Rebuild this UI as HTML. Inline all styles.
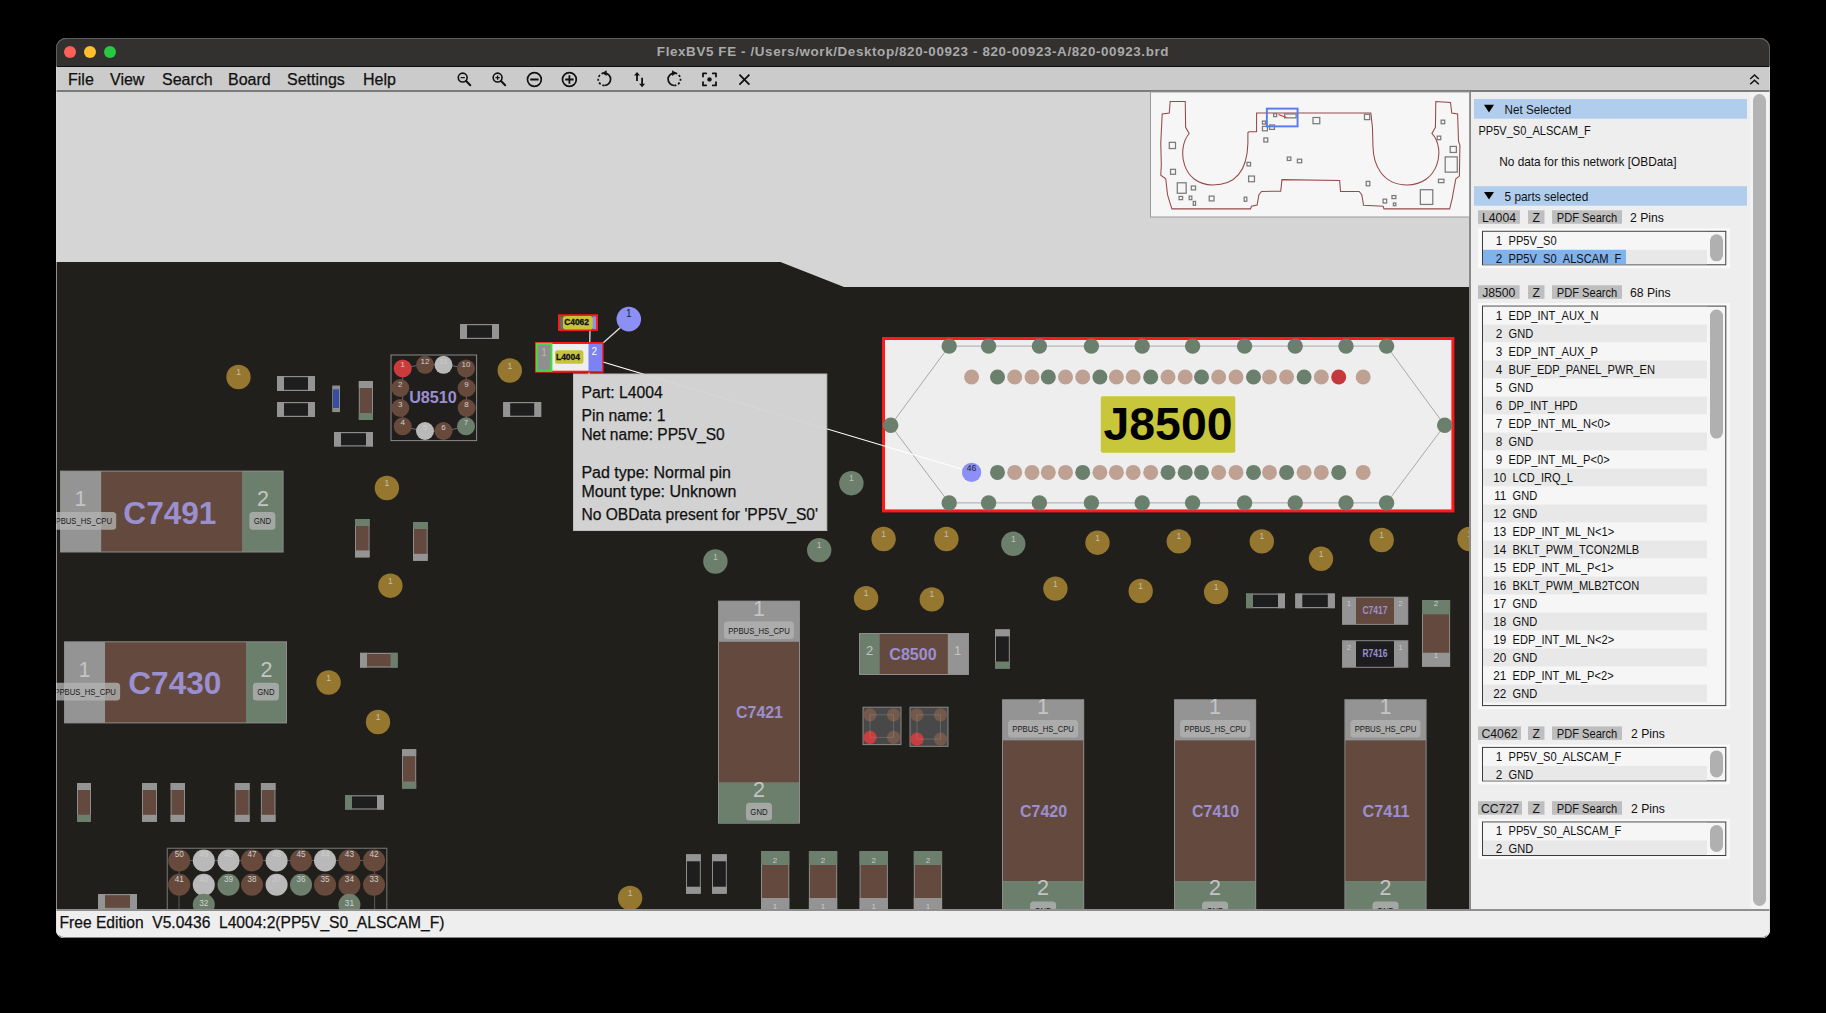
<!DOCTYPE html>
<html><head><meta charset="utf-8">
<style>
*{margin:0;padding:0;box-sizing:border-box}
html,body{width:1826px;height:1013px;background:#000;overflow:hidden;font-family:"Liberation Sans",sans-serif}
#win{position:absolute;left:56px;top:38px;width:1714px;height:900px;border-radius:10px 10px 8px 8px;overflow:hidden;background:#eeeeee}
#pg{position:absolute;left:-56px;top:-38px;width:1826px;height:1013px}
.a{position:absolute;white-space:pre}
#title{left:56px;top:38px;width:1714px;height:28px;background:#323130;border-top:1px solid #5c5b5a}
#ttxt{left:56px;top:44px;width:1714px;text-align:center;color:#a9a9a9;font-weight:bold;font-size:13.4px;letter-spacing:0.62px}
.dot{position:absolute;width:12px;height:12px;border-radius:50%;top:46px}
#menu{left:56px;top:66px;width:1714px;height:26px;background:#cbcbcb;border-top:1px solid #0e0e0e;border-bottom:2px solid #7b7b7b}
.mi{position:absolute;top:71.3px;font-size:16px;color:#111;-webkit-text-stroke:0.25px #111}
#board{position:absolute;left:56px;top:92px;width:1413px;height:817px}
#split{left:1469px;top:92px;width:2px;height:817px;background:#8a8a8a}
#panel{left:1471px;top:92px;width:299px;height:817px;background:#eeeeee}
#status{left:56px;top:909px;width:1714px;height:29px;background:#eeeeee;border-top:2px solid #8f8f8f}
#stxt{left:59.5px;top:914.3px;font-size:15.6px;color:#111;-webkit-text-stroke:0.25px #111}
.hdr{position:absolute;left:1474px;width:273px;height:20px;background:#b0cdee}
.hdr .tri{position:absolute;left:9px;top:6px;width:0;height:0;border-left:5px solid transparent;border-right:5px solid transparent;border-top:8px solid #000}
.hdr .ht{position:absolute;left:30px;top:3px;font-size:12.4px;color:#111}
.pt{font-size:12px;color:#111}
.btn{position:absolute;height:14px;background:#c5c5c5;font-size:12.2px;color:#222;line-height:14px;text-align:center}
.lbo{position:absolute;left:1478px;width:252px;background:#f9f9f9}
.lbi{position:absolute;left:1482px;width:244px;border:1px solid #3a3a3a;background:#f6f6f6;overflow:hidden}
.row{position:absolute;left:0;width:224px;height:18px;font-size:12px;color:#111}
.row.o{background:#f6f6f6}.row.e{background:#e8e8e8}
.row .n{position:absolute;right:204px;top:2px;text-align:right}
.row .t{position:absolute;left:25px;top:2px}
.lsb{position:absolute;left:227px;width:13px;background:#b0b0b0;border-radius:7px}
.icon{position:absolute;top:71px;width:18px;height:18px}
</style></head><body>
<div id="win"><div id="pg">
<div id="title" class="a"></div>
<div id="ttxt" class="a">FlexBV5 FE - /Users/work/Desktop/820-00923 - 820-00923-A/820-00923.brd</div>
<div class="dot" style="left:64px;background:#fe5f57"></div>
<div class="dot" style="left:84px;background:#febc2e"></div>
<div class="dot" style="left:104px;background:#28c840"></div>
<div id="menu" class="a"></div>
<div class="mi" style="left:68px">File</div>
<div class="mi" style="left:110px">View</div>
<div class="mi" style="left:162px">Search</div>
<div class="mi" style="left:228px">Board</div>
<div class="mi" style="left:287px">Settings</div>
<div class="mi" style="left:363px">Help</div>
<svg style="position:absolute;left:0;top:0" width="1826" height="95" viewBox="0 0 1826 95"><circle cx="462.7" cy="77.6" r="4.45" fill="none" stroke="#111" stroke-width="1.6"/>
<line x1="466.09999999999997" y1="81" x2="470.3" y2="85.3" stroke="#111" stroke-width="2" stroke-linecap="round"/>
<line x1="460.59999999999997" y1="77.6" x2="464.8" y2="77.6" stroke="#111" stroke-width="1.3"/>
<circle cx="497.6" cy="77.6" r="4.45" fill="none" stroke="#111" stroke-width="1.6"/>
<line x1="501.0" y1="81" x2="505.20000000000005" y2="85.3" stroke="#111" stroke-width="2" stroke-linecap="round"/>
<line x1="495.5" y1="77.6" x2="499.70000000000005" y2="77.6" stroke="#111" stroke-width="1.3"/>
<line x1="497.6" y1="75.5" x2="497.6" y2="79.7" stroke="#111" stroke-width="1.3"/>
<circle cx="534.4" cy="79.5" r="6.9" fill="none" stroke="#111" stroke-width="1.7"/><line x1="530.2" y1="79.5" x2="538.6" y2="79.5" stroke="#111" stroke-width="1.8"/>
<circle cx="569.4" cy="79.5" r="6.9" fill="none" stroke="#111" stroke-width="1.7"/><line x1="565.2" y1="79.5" x2="573.6" y2="79.5" stroke="#111" stroke-width="1.8"/><line x1="569.4" y1="75.3" x2="569.4" y2="83.7" stroke="#111" stroke-width="1.8"/>
<path d="M604.4 73.1 A6.2 6.2 0 0 1 604.4 85.5" fill="none" stroke="#111" stroke-width="1.7"/>
<path d="M604.4 85.5 A6.2 6.2 0 0 1 604.4 73.1" fill="none" stroke="#111" stroke-width="1.7" stroke-dasharray="2.1 1.9"/>
<path d="M602.2 73.1 L606.6 70.2 L606.6 76 Z" fill="#111"/>
<path d="M637 81 L637 74.5 M642.1 77.8 L642.1 84.5" fill="none" stroke="#111" stroke-width="1.8"/>
<path d="M634 75.5 L637 72 L640 75.5 Z M639.1 83.8 L642.1 87.2 L645.1 83.8 Z" fill="#111"/>
<path d="M674.3 73.1 A6.2 6.2 0 0 0 674.3 85.5" fill="none" stroke="#111" stroke-width="1.7"/>
<path d="M674.3 85.5 A6.2 6.2 0 0 0 674.3 73.1" fill="none" stroke="#111" stroke-width="1.7" stroke-dasharray="2.1 1.9"/>
<path d="M676.5 73.1 L672.1 70.2 L672.1 76 Z" fill="#111"/>
<path d="M703 76.6 L703 73.4 L706.2 73.4 M712.8 73.4 L716 73.4 L716 76.6 M716 82.2 L716 85.4 L712.8 85.4 M706.2 85.4 L703 85.4 L703 82.2" fill="none" stroke="#111" stroke-width="1.8" stroke-linecap="round" stroke-linejoin="round"/><circle cx="709.5" cy="79.4" r="2.2" fill="#111"/>
<path d="M739.4 74.6 L749.4 84.6 M749.4 74.6 L739.4 84.6" stroke="#111" stroke-width="1.8"/>
<path d="M1750.2 79 L1754.5 75 L1758.8 79 M1750.2 84.2 L1754.5 80.2 L1758.8 84.2" fill="none" stroke="#111" stroke-width="1.5"/></svg>

<svg id="board" viewBox="56 92 1413 817">
<rect x="56" y="92" width="1413" height="817" fill="#d4d5d4"/>
<path d="M56 262 L780.5 262 L844 287 L1469 287 L1469 909 L56 909 Z" fill="#201f1b"/>
<circle cx="238.5" cy="377.0" r="12.2" fill="#96772f"/>
<text x="238.5" y="375.0" font-size="8.5" fill="#c2bfb4" font-weight="400" text-anchor="middle">1</text>
<circle cx="386.9" cy="488.0" r="12.2" fill="#96772f"/>
<text x="386.9" y="486.0" font-size="8.5" fill="#c2bfb4" font-weight="400" text-anchor="middle">1</text>
<circle cx="390.4" cy="585.7" r="12.2" fill="#96772f"/>
<text x="390.4" y="583.7" font-size="8.5" fill="#c2bfb4" font-weight="400" text-anchor="middle">1</text>
<circle cx="328.6" cy="682.5" r="12.2" fill="#96772f"/>
<text x="328.6" y="680.5" font-size="8.5" fill="#c2bfb4" font-weight="400" text-anchor="middle">1</text>
<circle cx="378.0" cy="722.0" r="12.2" fill="#96772f"/>
<text x="378.0" y="720.0" font-size="8.5" fill="#c2bfb4" font-weight="400" text-anchor="middle">1</text>
<circle cx="509.8" cy="370.5" r="12.2" fill="#96772f"/>
<text x="509.8" y="368.5" font-size="8.5" fill="#c2bfb4" font-weight="400" text-anchor="middle">1</text>
<circle cx="883.6" cy="539.0" r="12.2" fill="#96772f"/>
<text x="883.6" y="537.0" font-size="8.5" fill="#c2bfb4" font-weight="400" text-anchor="middle">1</text>
<circle cx="946.4" cy="539.0" r="12.2" fill="#96772f"/>
<text x="946.4" y="537.0" font-size="8.5" fill="#c2bfb4" font-weight="400" text-anchor="middle">1</text>
<circle cx="866.1" cy="598.2" r="12.2" fill="#96772f"/>
<text x="866.1" y="596.2" font-size="8.5" fill="#c2bfb4" font-weight="400" text-anchor="middle">1</text>
<circle cx="931.8" cy="599.4" r="12.2" fill="#96772f"/>
<text x="931.8" y="597.4" font-size="8.5" fill="#c2bfb4" font-weight="400" text-anchor="middle">1</text>
<circle cx="1097.5" cy="542.7" r="12.2" fill="#96772f"/>
<text x="1097.5" y="540.7" font-size="8.5" fill="#c2bfb4" font-weight="400" text-anchor="middle">1</text>
<circle cx="1178.8" cy="541.4" r="12.2" fill="#96772f"/>
<text x="1178.8" y="539.4" font-size="8.5" fill="#c2bfb4" font-weight="400" text-anchor="middle">1</text>
<circle cx="1261.8" cy="541.4" r="12.2" fill="#96772f"/>
<text x="1261.8" y="539.4" font-size="8.5" fill="#c2bfb4" font-weight="400" text-anchor="middle">1</text>
<circle cx="1321.0" cy="558.8" r="12.2" fill="#96772f"/>
<text x="1321.0" y="556.8" font-size="8.5" fill="#c2bfb4" font-weight="400" text-anchor="middle">1</text>
<circle cx="1381.7" cy="540.0" r="12.2" fill="#96772f"/>
<text x="1381.7" y="538.0" font-size="8.5" fill="#c2bfb4" font-weight="400" text-anchor="middle">1</text>
<circle cx="1469.5" cy="539.0" r="12.2" fill="#96772f"/>
<text x="1469.5" y="537.0" font-size="8.5" fill="#c2bfb4" font-weight="400" text-anchor="middle">1</text>
<circle cx="1055.4" cy="588.6" r="12.2" fill="#96772f"/>
<text x="1055.4" y="586.6" font-size="8.5" fill="#c2bfb4" font-weight="400" text-anchor="middle">1</text>
<circle cx="1140.7" cy="591.0" r="12.2" fill="#96772f"/>
<text x="1140.7" y="589.0" font-size="8.5" fill="#c2bfb4" font-weight="400" text-anchor="middle">1</text>
<circle cx="1216.1" cy="592.1" r="12.2" fill="#96772f"/>
<text x="1216.1" y="590.1" font-size="8.5" fill="#c2bfb4" font-weight="400" text-anchor="middle">1</text>
<circle cx="630.1" cy="898.0" r="12.2" fill="#96772f"/>
<text x="630.1" y="896.0" font-size="8.5" fill="#c2bfb4" font-weight="400" text-anchor="middle">1</text>
<circle cx="715.4" cy="561.5" r="12.2" fill="#6c7f6d"/>
<text x="715.4" y="559.5" font-size="8.5" fill="#c2bfb4" font-weight="400" text-anchor="middle">1</text>
<circle cx="819.2" cy="550.1" r="12.2" fill="#6c7f6d"/>
<text x="819.2" y="548.1" font-size="8.5" fill="#c2bfb4" font-weight="400" text-anchor="middle">1</text>
<circle cx="1013.3" cy="543.8" r="12.2" fill="#6c7f6d"/>
<text x="1013.3" y="541.8" font-size="8.5" fill="#c2bfb4" font-weight="400" text-anchor="middle">1</text>
<circle cx="851.4" cy="483.2" r="12.2" fill="#6c7f6d"/>
<text x="851.4" y="481.2" font-size="8.5" fill="#c2bfb4" font-weight="400" text-anchor="middle">1</text>
<rect x="277.0" y="376.0" width="38.0" height="15.0" fill="#8c8c8c"/>
<rect x="277.0" y="376.0" width="7.0" height="15.0" fill="#949494"/>
<rect x="308.0" y="376.0" width="7.0" height="15.0" fill="#949494"/>
<rect x="284.0" y="377.2" width="24.0" height="12.6" fill="#1e1e1f"/>
<rect x="277.0" y="402.0" width="38.0" height="15.0" fill="#8c8c8c"/>
<rect x="277.0" y="402.0" width="7.0" height="15.0" fill="#949494"/>
<rect x="308.0" y="402.0" width="7.0" height="15.0" fill="#949494"/>
<rect x="284.0" y="403.2" width="24.0" height="12.6" fill="#1e1e1f"/>
<rect x="334.0" y="432.0" width="39.0" height="14.5" fill="#8c8c8c"/>
<rect x="334.0" y="432.0" width="7.0" height="14.5" fill="#949494"/>
<rect x="366.0" y="432.0" width="7.0" height="14.5" fill="#949494"/>
<rect x="341.0" y="433.2" width="25.0" height="12.1" fill="#1e1e1f"/>
<rect x="460.0" y="324.0" width="39.0" height="15.0" fill="#8c8c8c"/>
<rect x="460.0" y="324.0" width="7.0" height="15.0" fill="#949494"/>
<rect x="492.0" y="324.0" width="7.0" height="15.0" fill="#949494"/>
<rect x="467.0" y="325.2" width="25.0" height="12.6" fill="#1e1e1f"/>
<rect x="503.2" y="402.0" width="38.0" height="14.9" fill="#8c8c8c"/>
<rect x="503.2" y="402.0" width="7.0" height="14.9" fill="#949494"/>
<rect x="534.2" y="402.0" width="7.0" height="14.9" fill="#949494"/>
<rect x="510.2" y="403.2" width="24.0" height="12.5" fill="#1e1e1f"/>
<rect x="332.2" y="385.5" width="7.8" height="26.6" fill="#8c8c8c"/>
<rect x="333.0" y="389.3" width="6.0" height="18.7" fill="#344fa0"/>
<rect x="358.8" y="381.0" width="14.2" height="39.0" fill="#8c8c8c"/>
<rect x="358.8" y="381.0" width="14.2" height="7.0" fill="#949494"/>
<rect x="358.8" y="413.0" width="14.2" height="7.0" fill="#6b7f6c"/>
<rect x="359.8" y="388.0" width="12.2" height="25.0" fill="#644a3e"/>
<rect x="355.0" y="519.0" width="14.6" height="38.4" fill="#8c8c8c"/>
<rect x="355.0" y="519.0" width="14.6" height="7.0" fill="#6b7f6c"/>
<rect x="355.0" y="550.4" width="14.6" height="7.0" fill="#949494"/>
<rect x="356.0" y="526.0" width="12.6" height="24.4" fill="#644a3e"/>
<rect x="413.0" y="522.0" width="14.7" height="38.8" fill="#8c8c8c"/>
<rect x="413.0" y="522.0" width="14.7" height="7.0" fill="#6b7f6c"/>
<rect x="413.0" y="553.8" width="14.7" height="7.0" fill="#949494"/>
<rect x="414.0" y="529.0" width="12.7" height="24.8" fill="#644a3e"/>
<rect x="360.0" y="652.8" width="37.6" height="14.8" fill="#8c8c8c"/>
<rect x="360.0" y="652.8" width="7.0" height="14.8" fill="#949494"/>
<rect x="390.6" y="652.8" width="7.0" height="14.8" fill="#6b7f6c"/>
<rect x="367.0" y="654.0" width="23.6" height="12.4" fill="#644a3e"/>
<rect x="77.0" y="783.0" width="14.0" height="38.8" fill="#8c8c8c"/>
<rect x="77.0" y="783.0" width="14.0" height="7.0" fill="#949494"/>
<rect x="77.0" y="814.8" width="14.0" height="7.0" fill="#6b7f6c"/>
<rect x="78.0" y="790.0" width="12.0" height="24.8" fill="#644a3e"/>
<rect x="142.0" y="783.0" width="15.0" height="38.8" fill="#8c8c8c"/>
<rect x="142.0" y="783.0" width="15.0" height="7.0" fill="#949494"/>
<rect x="142.0" y="814.8" width="15.0" height="7.0" fill="#949494"/>
<rect x="143.0" y="790.0" width="13.0" height="24.8" fill="#644a3e"/>
<rect x="170.6" y="783.0" width="14.4" height="38.8" fill="#8c8c8c"/>
<rect x="170.6" y="783.0" width="14.4" height="7.0" fill="#949494"/>
<rect x="170.6" y="814.8" width="14.4" height="7.0" fill="#949494"/>
<rect x="171.6" y="790.0" width="12.4" height="24.8" fill="#644a3e"/>
<rect x="234.8" y="783.0" width="14.8" height="38.8" fill="#8c8c8c"/>
<rect x="234.8" y="783.0" width="14.8" height="7.0" fill="#949494"/>
<rect x="234.8" y="814.8" width="14.8" height="7.0" fill="#949494"/>
<rect x="235.8" y="790.0" width="12.8" height="24.8" fill="#644a3e"/>
<rect x="260.9" y="783.0" width="14.6" height="38.8" fill="#8c8c8c"/>
<rect x="260.9" y="783.0" width="14.6" height="7.0" fill="#949494"/>
<rect x="260.9" y="814.8" width="14.6" height="7.0" fill="#949494"/>
<rect x="261.9" y="790.0" width="12.6" height="24.8" fill="#644a3e"/>
<rect x="402.0" y="749.2" width="14.2" height="39.4" fill="#8c8c8c"/>
<rect x="402.0" y="749.2" width="14.2" height="7.0" fill="#949494"/>
<rect x="402.0" y="781.6" width="14.2" height="7.0" fill="#6b7f6c"/>
<rect x="403.0" y="756.2" width="12.2" height="25.4" fill="#644a3e"/>
<rect x="345.0" y="795.2" width="39.0" height="14.4" fill="#8c8c8c"/>
<rect x="345.0" y="795.2" width="7.0" height="14.4" fill="#6b7f6c"/>
<rect x="377.0" y="795.2" width="7.0" height="14.4" fill="#949494"/>
<rect x="352.0" y="796.4" width="25.0" height="12.0" fill="#1e1e1f"/>
<rect x="98.0" y="894.0" width="39.0" height="15.0" fill="#8c8c8c"/>
<rect x="98.0" y="894.0" width="7.0" height="15.0" fill="#949494"/>
<rect x="130.0" y="894.0" width="7.0" height="15.0" fill="#949494"/>
<rect x="105.0" y="895.2" width="25.0" height="12.6" fill="#644a3e"/>
<rect x="1246.0" y="593.5" width="39.0" height="14.7" fill="#8c8c8c"/>
<rect x="1246.0" y="593.5" width="7.0" height="14.7" fill="#6b7f6c"/>
<rect x="1278.0" y="593.5" width="7.0" height="14.7" fill="#949494"/>
<rect x="1253.0" y="594.7" width="25.0" height="12.3" fill="#1e1e1f"/>
<rect x="1295.3" y="593.5" width="39.5" height="14.7" fill="#8c8c8c"/>
<rect x="1295.3" y="593.5" width="7.0" height="14.7" fill="#949494"/>
<rect x="1327.8" y="593.5" width="7.0" height="14.7" fill="#949494"/>
<rect x="1302.3" y="594.7" width="25.5" height="12.3" fill="#1e1e1f"/>
<rect x="995.0" y="629.4" width="14.8" height="39.2" fill="#8c8c8c"/>
<rect x="995.0" y="629.4" width="14.8" height="7.0" fill="#949494"/>
<rect x="995.0" y="661.6" width="14.8" height="7.0" fill="#6b7f6c"/>
<rect x="996.0" y="636.4" width="12.8" height="25.2" fill="#1e1e1f"/>
<rect x="686.0" y="854.3" width="14.8" height="39.4" fill="#8c8c8c"/>
<rect x="686.0" y="854.3" width="14.8" height="7.0" fill="#949494"/>
<rect x="686.0" y="886.7" width="14.8" height="7.0" fill="#949494"/>
<rect x="687.0" y="861.3" width="12.8" height="25.4" fill="#1e1e1f"/>
<rect x="712.0" y="854.3" width="14.8" height="39.4" fill="#8c8c8c"/>
<rect x="712.0" y="854.3" width="14.8" height="7.0" fill="#949494"/>
<rect x="712.0" y="886.7" width="14.8" height="7.0" fill="#949494"/>
<rect x="713.0" y="861.3" width="12.8" height="25.4" fill="#1e1e1f"/>
<rect x="761.0" y="851.0" width="28.3" height="61.0" fill="#8c8c8c"/>
<rect x="761.0" y="851.0" width="28.3" height="14.0" fill="#6b7f6c"/>
<rect x="761.0" y="898.0" width="28.3" height="14.0" fill="#949494"/>
<rect x="762.0" y="865.0" width="26.3" height="33.0" fill="#644a3e"/>
<text x="775.1" y="863.0" font-size="8" fill="#c9c9c9" font-weight="400" text-anchor="middle">2</text>
<text x="775.1" y="908.5" font-size="8" fill="#c9c9c9" font-weight="400" text-anchor="middle">1</text>
<rect x="808.9" y="851.0" width="28.3" height="61.0" fill="#8c8c8c"/>
<rect x="808.9" y="851.0" width="28.3" height="14.0" fill="#6b7f6c"/>
<rect x="808.9" y="898.0" width="28.3" height="14.0" fill="#949494"/>
<rect x="809.9" y="865.0" width="26.3" height="33.0" fill="#644a3e"/>
<text x="823.0" y="863.0" font-size="8" fill="#c9c9c9" font-weight="400" text-anchor="middle">2</text>
<text x="823.0" y="908.5" font-size="8" fill="#c9c9c9" font-weight="400" text-anchor="middle">1</text>
<rect x="859.6" y="851.0" width="28.3" height="61.0" fill="#8c8c8c"/>
<rect x="859.6" y="851.0" width="28.3" height="14.0" fill="#6b7f6c"/>
<rect x="859.6" y="898.0" width="28.3" height="14.0" fill="#949494"/>
<rect x="860.6" y="865.0" width="26.3" height="33.0" fill="#644a3e"/>
<text x="873.8" y="863.0" font-size="8" fill="#c9c9c9" font-weight="400" text-anchor="middle">2</text>
<text x="873.8" y="908.5" font-size="8" fill="#c9c9c9" font-weight="400" text-anchor="middle">1</text>
<rect x="913.8" y="851.0" width="28.3" height="61.0" fill="#8c8c8c"/>
<rect x="913.8" y="851.0" width="28.3" height="14.0" fill="#6b7f6c"/>
<rect x="913.8" y="898.0" width="28.3" height="14.0" fill="#949494"/>
<rect x="914.8" y="865.0" width="26.3" height="33.0" fill="#644a3e"/>
<text x="927.9" y="863.0" font-size="8" fill="#c9c9c9" font-weight="400" text-anchor="middle">2</text>
<text x="927.9" y="908.5" font-size="8" fill="#c9c9c9" font-weight="400" text-anchor="middle">1</text>
<rect x="391.0" y="355.0" width="85.6" height="85.6" fill="#1f1e1d" stroke="#8a8a8a" stroke-width="1"/>
<path d="M402.7 368.4 Q433 360 466 368.4 L466.6 426.3 Q433 436 402.7 426.3 Z" fill="none" stroke="#6a6a6a" stroke-width="1"/>
<circle cx="402.7" cy="368.4" r="9" fill="#cc3b3b"/>
<text x="402.7" y="367.4" font-size="8" fill="#d0d0d0" font-weight="400" text-anchor="middle">1</text>
<circle cx="425.0" cy="364.8" r="9" fill="#674a3c"/>
<text x="425.0" y="363.8" font-size="8" fill="#d0d0d0" font-weight="400" text-anchor="middle">12</text>
<circle cx="443.5" cy="364.8" r="9" fill="#b9b9b9"/>
<text x="443.5" y="363.8" font-size="8" fill="#cccccc" font-weight="400" text-anchor="middle">11</text>
<circle cx="466.0" cy="368.4" r="9" fill="#674a3c"/>
<text x="466.0" y="367.4" font-size="8" fill="#d0d0d0" font-weight="400" text-anchor="middle">10</text>
<circle cx="400.3" cy="388.0" r="9" fill="#674a3c"/>
<text x="400.3" y="387.0" font-size="8" fill="#d0d0d0" font-weight="400" text-anchor="middle">2</text>
<circle cx="466.6" cy="388.0" r="9" fill="#674a3c"/>
<text x="466.6" y="387.0" font-size="8" fill="#d0d0d0" font-weight="400" text-anchor="middle">9</text>
<circle cx="400.3" cy="408.0" r="9" fill="#674a3c"/>
<text x="400.3" y="407.0" font-size="8" fill="#d0d0d0" font-weight="400" text-anchor="middle">3</text>
<circle cx="466.6" cy="408.0" r="9" fill="#674a3c"/>
<text x="466.6" y="407.0" font-size="8" fill="#d0d0d0" font-weight="400" text-anchor="middle">8</text>
<circle cx="402.7" cy="426.3" r="9" fill="#674a3c"/>
<text x="402.7" y="425.3" font-size="8" fill="#d0d0d0" font-weight="400" text-anchor="middle">4</text>
<circle cx="425.0" cy="431.0" r="9" fill="#b9b9b9"/>
<text x="425.0" y="430.0" font-size="8" fill="#cccccc" font-weight="400" text-anchor="middle">5</text>
<circle cx="443.5" cy="431.0" r="9" fill="#674a3c"/>
<text x="443.5" y="430.0" font-size="8" fill="#d0d0d0" font-weight="400" text-anchor="middle">6</text>
<circle cx="466.0" cy="426.3" r="9" fill="#6c7f6d"/>
<text x="466.0" y="425.3" font-size="8" fill="#d0d0d0" font-weight="400" text-anchor="middle">7</text>
<text x="433.0" y="402.8" font-size="16" fill="#9b8fd0" font-weight="700" text-anchor="middle" textLength="47.7" lengthAdjust="spacingAndGlyphs">U8510</text>
<rect x="60.0" y="470.6" width="223.6" height="81.9" fill="#8c8c8c"/>
<rect x="61.0" y="471.6" width="40.2" height="79.9" fill="#949494"/>
<rect x="101.2" y="471.6" width="141.2" height="79.9" fill="#644a3e"/>
<rect x="242.4" y="471.6" width="40.2" height="79.9" fill="#6b7f6c"/>
<text x="80.6" y="505.9" font-size="21.5" fill="#c4c4c4" font-weight="300" text-anchor="middle">1</text>
<text x="263.0" y="505.9" font-size="21.5" fill="#c4c4c4" font-weight="300" text-anchor="middle">2</text>
<rect x="46.2" y="512.1" width="70" height="17.6" rx="3.5" fill="#b4b4b4" fill-opacity="0.78"/>
<text x="81.2" y="524.1" font-size="9.2" fill="#1a1a1a" font-weight="400" text-anchor="middle" textLength="61.6" lengthAdjust="spacingAndGlyphs">PPBUS_HS_CPU</text>
<rect x="249.4" y="512.1" width="26" height="17.6" rx="3.5" fill="#b4b4b4" fill-opacity="0.78"/>
<text x="262.4" y="524.1" font-size="9.2" fill="#1a1a1a" font-weight="400" text-anchor="middle" textLength="17.3" lengthAdjust="spacingAndGlyphs">GND</text>
<text x="169.9" y="523.6" font-size="32" fill="#9b8fd0" font-weight="700" text-anchor="middle" textLength="93.1" lengthAdjust="spacingAndGlyphs">C7491</text>
<rect x="64.0" y="641.3" width="223.0" height="82.1" fill="#8c8c8c"/>
<rect x="65.0" y="642.3" width="40.0" height="80.1" fill="#949494"/>
<rect x="105.0" y="642.3" width="141.0" height="80.1" fill="#644a3e"/>
<rect x="246.0" y="642.3" width="40.0" height="80.1" fill="#6b7f6c"/>
<text x="84.5" y="676.6" font-size="21.5" fill="#c4c4c4" font-weight="300" text-anchor="middle">1</text>
<text x="266.5" y="676.6" font-size="21.5" fill="#c4c4c4" font-weight="300" text-anchor="middle">2</text>
<rect x="50.1" y="682.8" width="70" height="17.6" rx="3.5" fill="#b4b4b4" fill-opacity="0.78"/>
<text x="85.1" y="694.9" font-size="9.2" fill="#1a1a1a" font-weight="400" text-anchor="middle" textLength="61.6" lengthAdjust="spacingAndGlyphs">PPBUS_HS_CPU</text>
<rect x="252.9" y="682.8" width="26" height="17.6" rx="3.5" fill="#b4b4b4" fill-opacity="0.78"/>
<text x="265.9" y="694.9" font-size="9.2" fill="#1a1a1a" font-weight="400" text-anchor="middle" textLength="17.3" lengthAdjust="spacingAndGlyphs">GND</text>
<text x="174.8" y="694.4" font-size="32" fill="#9b8fd0" font-weight="700" text-anchor="middle" textLength="93.1" lengthAdjust="spacingAndGlyphs">C7430</text>
<rect x="718.0" y="600.6" width="82.0" height="223.0" fill="#8c8c8c"/>
<rect x="719.0" y="601.6" width="80.0" height="40.2" fill="#949494"/>
<rect x="719.0" y="641.8" width="80.0" height="140.8" fill="#644a3e"/>
<rect x="719.0" y="782.6" width="80.0" height="41.0" fill="#6b7f6c"/>
<text x="759.0" y="615.8" font-size="21.5" fill="#c4c4c4" font-weight="300" text-anchor="middle">1</text>
<rect x="724.0" y="621.4" width="70" height="17.6" rx="3.5" fill="#b4b4b4" fill-opacity="0.78"/>
<text x="759.0" y="633.5" font-size="9.2" fill="#1a1a1a" font-weight="400" text-anchor="middle" textLength="61.6" lengthAdjust="spacingAndGlyphs">PPBUS_HS_CPU</text>
<text x="759.0" y="796.8" font-size="21.5" fill="#c4c4c4" font-weight="300" text-anchor="middle">2</text>
<rect x="746.0" y="802.8" width="26" height="17.6" rx="3.5" fill="#b4b4b4" fill-opacity="0.78"/>
<text x="759.0" y="814.9" font-size="9.2" fill="#1a1a1a" font-weight="400" text-anchor="middle" textLength="17.3" lengthAdjust="spacingAndGlyphs">GND</text>
<text x="759.5" y="718.0" font-size="16" fill="#9b8fd0" font-weight="700" text-anchor="middle" textLength="47" lengthAdjust="spacingAndGlyphs">C7421</text>
<rect x="1002.0" y="699.2" width="82.2" height="223.0" fill="#8c8c8c"/>
<rect x="1003.0" y="700.2" width="80.2" height="40.2" fill="#949494"/>
<rect x="1003.0" y="740.4" width="80.2" height="140.8" fill="#644a3e"/>
<rect x="1003.0" y="881.2" width="80.2" height="41.0" fill="#6b7f6c"/>
<text x="1043.1" y="714.4" font-size="21.5" fill="#c4c4c4" font-weight="300" text-anchor="middle">1</text>
<rect x="1008.1" y="720.0" width="70" height="17.6" rx="3.5" fill="#b4b4b4" fill-opacity="0.78"/>
<text x="1043.1" y="732.1" font-size="9.2" fill="#1a1a1a" font-weight="400" text-anchor="middle" textLength="61.6" lengthAdjust="spacingAndGlyphs">PPBUS_HS_CPU</text>
<text x="1043.1" y="895.4" font-size="21.5" fill="#c4c4c4" font-weight="300" text-anchor="middle">2</text>
<rect x="1030.1" y="901.4" width="26" height="17.6" rx="3.5" fill="#b4b4b4" fill-opacity="0.78"/>
<text x="1043.1" y="913.5" font-size="9.2" fill="#1a1a1a" font-weight="400" text-anchor="middle" textLength="17.3" lengthAdjust="spacingAndGlyphs">GND</text>
<text x="1043.6" y="816.6" font-size="16" fill="#9b8fd0" font-weight="700" text-anchor="middle" textLength="47" lengthAdjust="spacingAndGlyphs">C7420</text>
<rect x="1174.0" y="699.2" width="82.2" height="223.0" fill="#8c8c8c"/>
<rect x="1175.0" y="700.2" width="80.2" height="40.2" fill="#949494"/>
<rect x="1175.0" y="740.4" width="80.2" height="140.8" fill="#644a3e"/>
<rect x="1175.0" y="881.2" width="80.2" height="41.0" fill="#6b7f6c"/>
<text x="1215.1" y="714.4" font-size="21.5" fill="#c4c4c4" font-weight="300" text-anchor="middle">1</text>
<rect x="1180.1" y="720.0" width="70" height="17.6" rx="3.5" fill="#b4b4b4" fill-opacity="0.78"/>
<text x="1215.1" y="732.1" font-size="9.2" fill="#1a1a1a" font-weight="400" text-anchor="middle" textLength="61.6" lengthAdjust="spacingAndGlyphs">PPBUS_HS_CPU</text>
<text x="1215.1" y="895.4" font-size="21.5" fill="#c4c4c4" font-weight="300" text-anchor="middle">2</text>
<rect x="1202.1" y="901.4" width="26" height="17.6" rx="3.5" fill="#b4b4b4" fill-opacity="0.78"/>
<text x="1215.1" y="913.5" font-size="9.2" fill="#1a1a1a" font-weight="400" text-anchor="middle" textLength="17.3" lengthAdjust="spacingAndGlyphs">GND</text>
<text x="1215.6" y="816.6" font-size="16" fill="#9b8fd0" font-weight="700" text-anchor="middle" textLength="47" lengthAdjust="spacingAndGlyphs">C7410</text>
<rect x="1344.4" y="699.2" width="82.2" height="223.0" fill="#8c8c8c"/>
<rect x="1345.4" y="700.2" width="80.2" height="40.2" fill="#949494"/>
<rect x="1345.4" y="740.4" width="80.2" height="140.8" fill="#644a3e"/>
<rect x="1345.4" y="881.2" width="80.2" height="41.0" fill="#6b7f6c"/>
<text x="1385.5" y="714.4" font-size="21.5" fill="#c4c4c4" font-weight="300" text-anchor="middle">1</text>
<rect x="1350.5" y="720.0" width="70" height="17.6" rx="3.5" fill="#b4b4b4" fill-opacity="0.78"/>
<text x="1385.5" y="732.1" font-size="9.2" fill="#1a1a1a" font-weight="400" text-anchor="middle" textLength="61.6" lengthAdjust="spacingAndGlyphs">PPBUS_HS_CPU</text>
<text x="1385.5" y="895.4" font-size="21.5" fill="#c4c4c4" font-weight="300" text-anchor="middle">2</text>
<rect x="1372.5" y="901.4" width="26" height="17.6" rx="3.5" fill="#b4b4b4" fill-opacity="0.78"/>
<text x="1385.5" y="913.5" font-size="9.2" fill="#1a1a1a" font-weight="400" text-anchor="middle" textLength="17.3" lengthAdjust="spacingAndGlyphs">GND</text>
<text x="1386.0" y="816.6" font-size="16" fill="#9b8fd0" font-weight="700" text-anchor="middle" textLength="47" lengthAdjust="spacingAndGlyphs">C7411</text>
<rect x="859.0" y="633.0" width="110.0" height="42.0" fill="#8c8c8c"/>
<rect x="860.0" y="634.0" width="19.6" height="40.0" fill="#6b7f6c"/>
<rect x="879.6" y="634.0" width="68.3" height="40.0" fill="#644a3e"/>
<rect x="947.9" y="634.0" width="20.1" height="40.0" fill="#949494"/>
<text x="869.5" y="655.0" font-size="13" fill="#c4c4c4" font-weight="300" text-anchor="middle">2</text>
<text x="957.5" y="655.0" font-size="13" fill="#c4c4c4" font-weight="300" text-anchor="middle">1</text>
<text x="913.0" y="659.8" font-size="16" fill="#9b8fd0" font-weight="700" text-anchor="middle" textLength="47.5" lengthAdjust="spacingAndGlyphs">C8500</text>
<rect x="863.0" y="707.2" width="38.0" height="37.4" fill="#484848" stroke="#8a8a8a" stroke-width="1"/>
<circle cx="870.0" cy="714.8" r="6.6" fill="#74594b"/>
<circle cx="893.5" cy="714.8" r="6.6" fill="#74594b"/>
<circle cx="870.0" cy="737.4" r="6.6" fill="#c93d3f"/>
<circle cx="893.5" cy="737.4" r="6.6" fill="#74594b"/>
<rect x="870.0" y="714.8" width="23.5" height="22.6" fill="none" stroke="#8a8a8a" stroke-width="1" stroke-opacity="0.45"/>
<rect x="910.0" y="707.2" width="38.0" height="39.1" fill="#484848" stroke="#8a8a8a" stroke-width="1"/>
<circle cx="917.0" cy="714.8" r="6.6" fill="#74594b"/>
<circle cx="940.5" cy="714.8" r="6.6" fill="#74594b"/>
<circle cx="917.0" cy="739.1" r="6.6" fill="#c93d3f"/>
<circle cx="940.5" cy="739.1" r="6.6" fill="#74594b"/>
<rect x="917.0" y="714.8" width="23.5" height="24.3" fill="none" stroke="#8a8a8a" stroke-width="1" stroke-opacity="0.45"/>
<rect x="1342.0" y="596.7" width="66.3" height="28.2" fill="#8c8c8c"/>
<rect x="1343.0" y="597.7" width="13.0" height="26.2" fill="#949494"/>
<rect x="1356.0" y="597.7" width="38.0" height="26.2" fill="#644a3e"/>
<rect x="1394.0" y="597.7" width="13.3" height="26.2" fill="#949494"/>
<text x="1349.0" y="606.0" font-size="8" fill="#c8c8c8" font-weight="400" text-anchor="middle">1</text>
<text x="1400.5" y="606.0" font-size="8" fill="#c8c8c8" font-weight="400" text-anchor="middle">2</text>
<text x="1375.0" y="613.5" font-size="10.5" fill="#9b8fd0" font-weight="700" text-anchor="middle" textLength="25" lengthAdjust="spacingAndGlyphs">C7417</text>
<rect x="1342.0" y="640.2" width="66.3" height="27.6" fill="#8c8c8c"/>
<rect x="1343.0" y="641.2" width="13.0" height="25.6" fill="#949494"/>
<rect x="1356.0" y="641.2" width="38.0" height="25.6" fill="#1d1d1f"/>
<rect x="1394.0" y="641.2" width="13.3" height="25.6" fill="#949494"/>
<text x="1349.0" y="650.0" font-size="8" fill="#c8c8c8" font-weight="400" text-anchor="middle">2</text>
<text x="1400.5" y="650.0" font-size="8" fill="#c8c8c8" font-weight="400" text-anchor="middle">1</text>
<text x="1375.0" y="657.0" font-size="10.5" fill="#9b8fd0" font-weight="700" text-anchor="middle" textLength="25" lengthAdjust="spacingAndGlyphs">R7416</text>
<rect x="1422.0" y="600.2" width="28.1" height="66.5" fill="#8c8c8c"/>
<rect x="1422.0" y="600.2" width="28.1" height="14.0" fill="#6b7f6c"/>
<rect x="1422.0" y="652.7" width="28.1" height="14.0" fill="#949494"/>
<rect x="1423.0" y="614.2" width="26.1" height="38.5" fill="#644a3e"/>
<text x="1436.0" y="606.0" font-size="8" fill="#d0d0d0" font-weight="400" text-anchor="middle">2</text>
<text x="1436.0" y="658.0" font-size="8" fill="#d0d0d0" font-weight="400" text-anchor="middle">1</text>
<rect x="167.3" y="848.3" width="219.5" height="71.7" fill="none" stroke="#6a6a6a" stroke-width="1.2"/>
<rect x="179.0" y="860.5" width="195.6" height="69.5" fill="none" stroke="#5a5a5a" stroke-width="1"/>
<circle cx="179.2" cy="860.5" r="11" fill="#674a3c"/>
<text x="179.2" y="857.0" font-size="8.2" fill="#cfcfcf" font-weight="400" text-anchor="middle">50</text>
<circle cx="203.8" cy="860.5" r="11" fill="#b9b9b9"/>
<text x="203.8" y="857.0" font-size="8.2" fill="#cdcdcd" font-weight="400" text-anchor="middle">49</text>
<circle cx="228.5" cy="860.5" r="11" fill="#b9b9b9"/>
<text x="228.5" y="857.0" font-size="8.2" fill="#cdcdcd" font-weight="400" text-anchor="middle">48</text>
<circle cx="252.0" cy="860.5" r="11" fill="#674a3c"/>
<text x="252.0" y="857.0" font-size="8.2" fill="#cfcfcf" font-weight="400" text-anchor="middle">47</text>
<circle cx="276.6" cy="860.5" r="11" fill="#b9b9b9"/>
<text x="276.6" y="857.0" font-size="8.2" fill="#cdcdcd" font-weight="400" text-anchor="middle">46</text>
<circle cx="301.0" cy="860.5" r="11" fill="#674a3c"/>
<text x="301.0" y="857.0" font-size="8.2" fill="#cfcfcf" font-weight="400" text-anchor="middle">45</text>
<circle cx="325.0" cy="860.5" r="11" fill="#b9b9b9"/>
<text x="325.0" y="857.0" font-size="8.2" fill="#cdcdcd" font-weight="400" text-anchor="middle">44</text>
<circle cx="349.4" cy="860.5" r="11" fill="#674a3c"/>
<text x="349.4" y="857.0" font-size="8.2" fill="#cfcfcf" font-weight="400" text-anchor="middle">43</text>
<circle cx="374.0" cy="860.5" r="11" fill="#674a3c"/>
<text x="374.0" y="857.0" font-size="8.2" fill="#cfcfcf" font-weight="400" text-anchor="middle">42</text>
<circle cx="179.2" cy="884.8" r="11" fill="#674a3c"/>
<text x="179.2" y="882.0" font-size="8.2" fill="#cfcfcf" font-weight="400" text-anchor="middle">41</text>
<circle cx="203.8" cy="884.8" r="11" fill="#b9b9b9"/>
<text x="203.8" y="882.0" font-size="8.2" fill="#cdcdcd" font-weight="400" text-anchor="middle">40</text>
<circle cx="228.5" cy="884.8" r="11" fill="#6c7f6d"/>
<text x="228.5" y="882.0" font-size="8.2" fill="#cfcfcf" font-weight="400" text-anchor="middle">39</text>
<circle cx="252.0" cy="884.8" r="11" fill="#674a3c"/>
<text x="252.0" y="882.0" font-size="8.2" fill="#cfcfcf" font-weight="400" text-anchor="middle">38</text>
<circle cx="276.6" cy="884.8" r="11" fill="#b9b9b9"/>
<text x="276.6" y="882.0" font-size="8.2" fill="#cdcdcd" font-weight="400" text-anchor="middle">37</text>
<circle cx="301.0" cy="884.8" r="11" fill="#6c7f6d"/>
<text x="301.0" y="882.0" font-size="8.2" fill="#cfcfcf" font-weight="400" text-anchor="middle">36</text>
<circle cx="325.0" cy="884.8" r="11" fill="#674a3c"/>
<text x="325.0" y="882.0" font-size="8.2" fill="#cfcfcf" font-weight="400" text-anchor="middle">35</text>
<circle cx="349.4" cy="884.8" r="11" fill="#674a3c"/>
<text x="349.4" y="882.0" font-size="8.2" fill="#cfcfcf" font-weight="400" text-anchor="middle">34</text>
<circle cx="374.0" cy="884.8" r="11" fill="#674a3c"/>
<text x="374.0" y="882.0" font-size="8.2" fill="#cfcfcf" font-weight="400" text-anchor="middle">33</text>
<circle cx="203.8" cy="904.7" r="11" fill="#6c7f6d"/>
<text x="203.8" y="906.0" font-size="8.2" fill="#d4d4d4" font-weight="400" text-anchor="middle">32</text>
<circle cx="349.4" cy="904.7" r="11" fill="#6c7f6d"/>
<text x="349.4" y="906.0" font-size="8.2" fill="#d4d4d4" font-weight="400" text-anchor="middle">31</text>
<rect x="883.5" y="338.5" width="569.4" height="172.4" fill="#eeeeee" stroke="#ff1a1a" stroke-width="3"/>
<path d="M949.2 346.1 L890.7 425.3 L949.2 502.9 M1386.6 346.1 L1444.7 425.3 L1386.6 502.9 M949.2 346.1 L1386.6 346.1 M949.2 502.9 L1386.6 502.9" fill="none" stroke="#a9a9a9" stroke-width="1"/>
<circle cx="949.2" cy="346.1" r="7.7" fill="#6b7f6d"/>
<circle cx="949.2" cy="502.9" r="7.7" fill="#6b7f6d"/>
<circle cx="988.6" cy="346.1" r="7.7" fill="#6b7f6d"/>
<circle cx="988.6" cy="502.9" r="7.7" fill="#6b7f6d"/>
<circle cx="1039.4" cy="346.1" r="7.7" fill="#6b7f6d"/>
<circle cx="1039.4" cy="502.9" r="7.7" fill="#6b7f6d"/>
<circle cx="1091.4" cy="346.1" r="7.7" fill="#6b7f6d"/>
<circle cx="1091.4" cy="502.9" r="7.7" fill="#6b7f6d"/>
<circle cx="1142.2" cy="346.1" r="7.7" fill="#6b7f6d"/>
<circle cx="1142.2" cy="502.9" r="7.7" fill="#6b7f6d"/>
<circle cx="1192.6" cy="346.1" r="7.7" fill="#6b7f6d"/>
<circle cx="1192.6" cy="502.9" r="7.7" fill="#6b7f6d"/>
<circle cx="1244.6" cy="346.1" r="7.7" fill="#6b7f6d"/>
<circle cx="1244.6" cy="502.9" r="7.7" fill="#6b7f6d"/>
<circle cx="1295.2" cy="346.1" r="7.7" fill="#6b7f6d"/>
<circle cx="1295.2" cy="502.9" r="7.7" fill="#6b7f6d"/>
<circle cx="1346.0" cy="346.1" r="7.7" fill="#6b7f6d"/>
<circle cx="1346.0" cy="502.9" r="7.7" fill="#6b7f6d"/>
<circle cx="1386.6" cy="346.1" r="7.7" fill="#6b7f6d"/>
<circle cx="1386.6" cy="502.9" r="7.7" fill="#6b7f6d"/>
<circle cx="890.7" cy="425.3" r="7.7" fill="#6b7f6d"/>
<circle cx="1444.7" cy="425.3" r="7.7" fill="#6b7f6d"/>
<circle cx="971.6" cy="377.0" r="7.5" fill="#bfa194"/>
<circle cx="997.5" cy="377.0" r="7.5" fill="#6b7f6d"/>
<circle cx="1014.7" cy="377.0" r="7.5" fill="#bfa194"/>
<circle cx="1032.0" cy="377.0" r="7.5" fill="#bfa194"/>
<circle cx="1048.3" cy="377.0" r="7.5" fill="#6b7f6d"/>
<circle cx="1065.5" cy="377.0" r="7.5" fill="#bfa194"/>
<circle cx="1082.7" cy="377.0" r="7.5" fill="#bfa194"/>
<circle cx="1099.9" cy="377.0" r="7.5" fill="#6b7f6d"/>
<circle cx="1116.4" cy="377.0" r="7.5" fill="#bfa194"/>
<circle cx="1133.2" cy="377.0" r="7.5" fill="#bfa194"/>
<circle cx="1150.7" cy="377.0" r="7.5" fill="#6b7f6d"/>
<circle cx="1168.0" cy="377.0" r="7.5" fill="#bfa194"/>
<circle cx="1185.2" cy="377.0" r="7.5" fill="#bfa194"/>
<circle cx="1201.5" cy="377.0" r="7.5" fill="#6b7f6d"/>
<circle cx="1218.7" cy="377.0" r="7.5" fill="#bfa194"/>
<circle cx="1236.0" cy="377.0" r="7.5" fill="#bfa194"/>
<circle cx="1253.5" cy="377.0" r="7.5" fill="#6b7f6d"/>
<circle cx="1269.5" cy="377.0" r="7.5" fill="#bfa194"/>
<circle cx="1286.6" cy="377.0" r="7.5" fill="#bfa194"/>
<circle cx="1304.1" cy="377.0" r="7.5" fill="#6b7f6d"/>
<circle cx="1321.3" cy="377.0" r="7.5" fill="#bfa194"/>
<circle cx="1338.7" cy="377.0" r="7.5" fill="#c5393c"/>
<circle cx="1363.2" cy="377.0" r="7.5" fill="#bfa194"/>
<circle cx="971.6" cy="472.4" r="9.6" fill="#8b8ff6"/>
<circle cx="997.5" cy="472.4" r="7.5" fill="#6b7f6d"/>
<circle cx="1014.7" cy="472.4" r="7.5" fill="#bfa194"/>
<circle cx="1032.0" cy="472.4" r="7.5" fill="#bfa194"/>
<circle cx="1048.3" cy="472.4" r="7.5" fill="#bfa194"/>
<circle cx="1065.5" cy="472.4" r="7.5" fill="#bfa194"/>
<circle cx="1082.7" cy="472.4" r="7.5" fill="#6b7f6d"/>
<circle cx="1099.9" cy="472.4" r="7.5" fill="#bfa194"/>
<circle cx="1116.4" cy="472.4" r="7.5" fill="#bfa194"/>
<circle cx="1133.2" cy="472.4" r="7.5" fill="#bfa194"/>
<circle cx="1150.7" cy="472.4" r="7.5" fill="#bfa194"/>
<circle cx="1168.0" cy="472.4" r="7.5" fill="#6b7f6d"/>
<circle cx="1185.2" cy="472.4" r="7.5" fill="#6b7f6d"/>
<circle cx="1201.5" cy="472.4" r="7.5" fill="#6b7f6d"/>
<circle cx="1218.7" cy="472.4" r="7.5" fill="#bfa194"/>
<circle cx="1236.0" cy="472.4" r="7.5" fill="#bfa194"/>
<circle cx="1253.5" cy="472.4" r="7.5" fill="#6b7f6d"/>
<circle cx="1269.5" cy="472.4" r="7.5" fill="#bfa194"/>
<circle cx="1286.6" cy="472.4" r="7.5" fill="#6b7f6d"/>
<circle cx="1304.1" cy="472.4" r="7.5" fill="#bfa194"/>
<circle cx="1321.3" cy="472.4" r="7.5" fill="#bfa194"/>
<circle cx="1338.7" cy="472.4" r="7.5" fill="#6b7f6d"/>
<circle cx="1363.2" cy="472.4" r="7.5" fill="#bfa194"/>
<text x="971.6" y="471.0" font-size="8.5" fill="#222" font-weight="400" text-anchor="middle">46</text>
<rect x="1100.8" y="396.3" width="134.5" height="56.4" rx="2" fill="#c8c63a"/>
<text x="1168.0" y="440.3" font-size="46" fill="#000" font-weight="700" text-anchor="middle" textLength="129" lengthAdjust="spacingAndGlyphs">J8500</text>
<line x1="603" y1="362" x2="961.5" y2="469" stroke="#ffffff" stroke-width="1.1"/>
<line x1="603" y1="343" x2="621" y2="327" stroke="#e0e0e0" stroke-width="1.3"/>
<line x1="590" y1="331" x2="589" y2="374" stroke="#e0e0e0" stroke-width="1.3"/>
<rect x="559.0" y="315.3" width="38.0" height="14.6" fill="#201f1b" stroke="#ff1a1a" stroke-width="2"/>
<rect x="559.9" y="316.2" width="3.6" height="12.8" fill="#5f6e66"/>
<rect x="592.5" y="316.2" width="3.6" height="12.8" fill="#8b8ff6"/>
<rect x="562.9" y="316.1" width="30" height="13.3" rx="2.2" fill="#c8c43a"/>
<text x="576.6" y="324.8" font-size="8.3" fill="#111" font-weight="700" text-anchor="middle" stroke="#111" stroke-width="0.3" textLength="24.8" lengthAdjust="spacingAndGlyphs">C4062</text>
<rect x="536.0" y="343.0" width="66.6" height="28.7" fill="#eeeeee" stroke="#ff1a1a" stroke-width="2"/>
<rect x="536.8" y="343.8" width="14.6" height="27.1" fill="#8f8f8f" stroke="#3ee03e" stroke-width="2"/>
<rect x="588.5" y="343.9" width="13.7" height="27.0" fill="#7d81f2"/>
<text x="544.0" y="355.5" font-size="10" fill="#b8b8b8" font-weight="300" text-anchor="middle">1</text>
<text x="594.4" y="354.7" font-size="10" fill="#ffffff" font-weight="400" text-anchor="middle">2</text>
<rect x="555" y="350.3" width="28.4" height="13.5" rx="2.5" fill="#c8c43a"/>
<text x="568.0" y="359.8" font-size="8.6" fill="#111" font-weight="700" text-anchor="middle" stroke="#111" stroke-width="0.3" textLength="24" lengthAdjust="spacingAndGlyphs">L4004</text>
<circle cx="628.8" cy="319.1" r="12.3" fill="#8b8ff6"/>
<text x="628.9" y="316.8" font-size="10" fill="#222" font-weight="400" text-anchor="middle">1</text>
<rect x="573.5" y="374" width="253.3" height="156.5" fill="#d5d5d5" fill-opacity="0.985" stroke="#bdbdbd" stroke-width="1"/>
<text x="581.4" y="397.8" font-size="15.6" fill="#111" font-weight="400" text-anchor="start" stroke="#111" stroke-width="0.25" textLength="81.5" lengthAdjust="spacingAndGlyphs">Part: L4004</text>
<text x="581.4" y="420.8" font-size="15.6" fill="#111" font-weight="400" text-anchor="start" stroke="#111" stroke-width="0.25" textLength="84" lengthAdjust="spacingAndGlyphs">Pin name: 1</text>
<text x="581.4" y="439.8" font-size="15.6" fill="#111" font-weight="400" text-anchor="start" stroke="#111" stroke-width="0.25" textLength="143.3" lengthAdjust="spacingAndGlyphs">Net name: PP5V_S0</text>
<text x="581.4" y="478.0" font-size="15.6" fill="#111" font-weight="400" text-anchor="start" stroke="#111" stroke-width="0.25" textLength="149.6" lengthAdjust="spacingAndGlyphs">Pad type: Normal pin</text>
<text x="581.4" y="496.8" font-size="15.6" fill="#111" font-weight="400" text-anchor="start" stroke="#111" stroke-width="0.25" textLength="154.9" lengthAdjust="spacingAndGlyphs">Mount type: Unknown</text>
<text x="581.4" y="519.5" font-size="15.6" fill="#111" font-weight="400" text-anchor="start" stroke="#111" stroke-width="0.25" textLength="236.6" lengthAdjust="spacingAndGlyphs">No OBData present for &#39;PP5V_S0&#39;</text>
</svg>

<div id="split" class="a"></div>
<div id="panel" class="a"></div>
<svg style="position:absolute;left:0;top:0" width="1826" height="1013" viewBox="0 0 1826 1013"><rect x="1150.5" y="92" width="319" height="125" fill="#f6f6f6" stroke="#9a9a9a" stroke-width="1"/>
<g transform="translate(1148 90) scale(0.17743)">
<path d="M125 65 L210 65 L212 210 L232 245 C 160 330, 190 535, 365 535 C 520 535, 560 420, 563 300 L563 240 L570 235 L612 235 L612 130 L1256 130 L1265 210 L1268 320 C 1270 420, 1320 535, 1460 535 C 1640 535, 1680 330, 1600 245 L1620 210 L1622 65 L1705 70 L1712 130 L1745 135 L1750 290 L1758 310 L1755 485 L1735 500 L1720 580 L1715 610 L1700 670 L1330 670 L1325 655 L1215 650 L1205 590 L1190 572 L1085 572 L1080 510 L755 505 L748 570 L640 572 L625 590 L615 648 L583 655 L578 670 L135 670 L125 640 L110 590 L100 500 L72 480 L75 420 L72 300 L80 135 L120 130 Z" fill="none" stroke="#944a4a" stroke-width="6"/>
<rect x="120" y="295" width="35" height="35" fill="none" stroke="#7a7a7a" stroke-width="7"/>
<rect x="127" y="447" width="28" height="28" fill="none" stroke="#7a7a7a" stroke-width="7"/>
<rect x="165" y="523" width="50" height="59" fill="none" stroke="#7a7a7a" stroke-width="7"/>
<rect x="244" y="541" width="24" height="22" fill="none" stroke="#7a7a7a" stroke-width="7"/>
<rect x="175" y="600" width="20" height="18" fill="none" stroke="#7a7a7a" stroke-width="7"/>
<rect x="232" y="598" width="15" height="20" fill="none" stroke="#7a7a7a" stroke-width="7"/>
<rect x="255" y="628" width="13" height="22" fill="none" stroke="#7a7a7a" stroke-width="7"/>
<rect x="345" y="598" width="27" height="27" fill="none" stroke="#7a7a7a" stroke-width="7"/>
<rect x="542" y="604" width="15" height="23" fill="none" stroke="#7a7a7a" stroke-width="7"/>
<rect x="567" y="485" width="33" height="32" fill="none" stroke="#7a7a7a" stroke-width="7"/>
<rect x="558" y="408" width="20" height="20" fill="none" stroke="#7a7a7a" stroke-width="7"/>
<rect x="645" y="175" width="17" height="17" fill="none" stroke="#7a7a7a" stroke-width="7"/>
<rect x="645" y="205" width="28" height="25" fill="none" stroke="#7a7a7a" stroke-width="7"/>
<rect x="685" y="197" width="28" height="25" fill="none" stroke="#7a7a7a" stroke-width="7"/>
<rect x="653" y="270" width="22" height="23" fill="none" stroke="#7a7a7a" stroke-width="7"/>
<rect x="708" y="133" width="17" height="17" fill="none" stroke="#7a7a7a" stroke-width="7"/>
<rect x="770" y="135" width="65" height="22" fill="none" stroke="#7a7a7a" stroke-width="7"/>
<rect x="785" y="378" width="20" height="19" fill="none" stroke="#7a7a7a" stroke-width="7"/>
<rect x="842" y="390" width="24" height="20" fill="none" stroke="#7a7a7a" stroke-width="7"/>
<rect x="930" y="155" width="38" height="35" fill="none" stroke="#7a7a7a" stroke-width="7"/>
<rect x="1220" y="137" width="30" height="30" fill="none" stroke="#7a7a7a" stroke-width="7"/>
<rect x="1230" y="515" width="20" height="25" fill="none" stroke="#7a7a7a" stroke-width="7"/>
<rect x="1325" y="615" width="20" height="22" fill="none" stroke="#7a7a7a" stroke-width="7"/>
<rect x="1375" y="595" width="22" height="17" fill="none" stroke="#7a7a7a" stroke-width="7"/>
<rect x="1383" y="637" width="14" height="15" fill="none" stroke="#7a7a7a" stroke-width="7"/>
<rect x="1535" y="562" width="70" height="83" fill="none" stroke="#7a7a7a" stroke-width="7"/>
<rect x="1637" y="503" width="31" height="19" fill="none" stroke="#7a7a7a" stroke-width="7"/>
<rect x="1675" y="377" width="68" height="86" fill="none" stroke="#7a7a7a" stroke-width="7"/>
<rect x="1703" y="318" width="35" height="34" fill="none" stroke="#7a7a7a" stroke-width="7"/>
<rect x="1630" y="260" width="20" height="20" fill="none" stroke="#7a7a7a" stroke-width="7"/>
<rect x="1652" y="170" width="20" height="20" fill="none" stroke="#7a7a7a" stroke-width="7"/>
<rect x="670" y="105" width="173" height="100" fill="none" stroke="#5b7cf0" stroke-width="11"/>
<line x1="735" y1="138" x2="780" y2="155" stroke="#e03030" stroke-width="7"/>
</g><rect x="1750.0" y="92.0" width="19.0" height="817.0" fill="#f3f3f3"/>
<rect x="1753" y="94" width="13" height="812" rx="6.5" fill="#b3b3b3"/>
<rect x="1474.0" y="99.0" width="273.0" height="19.7" fill="#b0cdee"/>
<path d="M1484 104.8 L1494 104.8 L1489 112.4 Z" fill="#000"/>
<text x="1504.5" y="114.3" font-size="12.6" fill="#111" font-weight="400" text-anchor="start" textLength="66.8" lengthAdjust="spacingAndGlyphs">Net Selected</text>
<text x="1478.4" y="134.8" font-size="12.4" fill="#111" font-weight="400" text-anchor="start" textLength="112.4" lengthAdjust="spacingAndGlyphs">PP5V_S0_ALSCAM_F</text>
<text x="1499.2" y="166.1" font-size="12.4" fill="#111" font-weight="400" text-anchor="start" textLength="177.3" lengthAdjust="spacingAndGlyphs">No data for this network [OBData]</text>
<rect x="1474.0" y="186.2" width="273.0" height="19.5" fill="#b0cdee"/>
<path d="M1484 191.9 L1494 191.9 L1489 199.5 Z" fill="#000"/>
<text x="1504.5" y="201.4" font-size="12.6" fill="#111" font-weight="400" text-anchor="start" textLength="83.8" lengthAdjust="spacingAndGlyphs">5 parts selected</text>
<rect x="1478.0" y="210.3" width="41.9" height="13.5" fill="#bebebe"/>
<text x="1499.0" y="221.6" font-size="12.2" fill="#141414" font-weight="400" text-anchor="middle">L4004</text>
<rect x="1528.0" y="210.3" width="16.5" height="13.5" fill="#bebebe"/>
<text x="1536.2" y="221.6" font-size="12.2" fill="#141414" font-weight="400" text-anchor="middle">Z</text>
<rect x="1552.0" y="210.3" width="70.0" height="13.5" fill="#bebebe"/>
<text x="1587.0" y="221.6" font-size="12.2" fill="#141414" font-weight="400" text-anchor="middle" textLength="60.5" lengthAdjust="spacingAndGlyphs">PDF Search</text>
<text x="1630.0" y="221.6" font-size="12.2" fill="#111" font-weight="400" text-anchor="start">2 Pins</text>
<rect x="1478.0" y="228.3" width="252.0" height="40.0" fill="#f9f9f9"/>
<rect x="1482.5" y="231.3" width="243.3" height="33.5" fill="#f6f6f6" stroke="#3c3c3c" stroke-width="1"/>
<svg x="1483" y="231.8" width="242" height="32.5" overflow="hidden">
<rect x="0" y="0" width="224" height="18" fill="#f6f6f6"/>
<text x="20.75" y="13" font-size="12.6" fill="#111" text-anchor="end" transform="scale(0.93 1)">1</text>
<text x="28.60" y="13" font-size="12.4" fill="#111" transform="scale(0.895 1)">PP5V_S0</text>
<rect x="0" y="18" width="224" height="18" fill="#e8e8e8"/>
<rect x="0" y="18" width="143" height="18" fill="#80b2ee"/>
<text x="20.75" y="31" font-size="12.6" fill="#111" text-anchor="end" transform="scale(0.93 1)">2</text>
<text x="28.60" y="31" font-size="12.4" fill="#111" transform="scale(0.895 1)">PP5V_S0_ALSCAM_F</text>
<rect x="227" y="2.5" width="13" height="27" rx="6.5" fill="#b0b0b0"/>
</svg>
<rect x="1478.0" y="285.3" width="41.6" height="13.5" fill="#bebebe"/>
<text x="1498.8" y="296.6" font-size="12.2" fill="#141414" font-weight="400" text-anchor="middle">J8500</text>
<rect x="1528.0" y="285.3" width="16.5" height="13.5" fill="#bebebe"/>
<text x="1536.2" y="296.6" font-size="12.2" fill="#141414" font-weight="400" text-anchor="middle">Z</text>
<rect x="1552.0" y="285.3" width="70.0" height="13.5" fill="#bebebe"/>
<text x="1587.0" y="296.6" font-size="12.2" fill="#141414" font-weight="400" text-anchor="middle" textLength="60.5" lengthAdjust="spacingAndGlyphs">PDF Search</text>
<text x="1630.0" y="296.6" font-size="12.2" fill="#111" font-weight="400" text-anchor="start">68 Pins</text>
<rect x="1478.0" y="303.1" width="252.0" height="406.0" fill="#f9f9f9"/>
<rect x="1482.5" y="306.1" width="243.3" height="399.5" fill="#f6f6f6" stroke="#3c3c3c" stroke-width="1"/>
<svg x="1483" y="306.6" width="242" height="398.5" overflow="hidden">
<rect x="0" y="0" width="224" height="18" fill="#f6f6f6"/>
<text x="20.75" y="13" font-size="12.6" fill="#111" text-anchor="end" transform="scale(0.93 1)">1</text>
<text x="28.60" y="13" font-size="12.4" fill="#111" transform="scale(0.895 1)">EDP_INT_AUX_N</text>
<rect x="0" y="18" width="224" height="18" fill="#e8e8e8"/>
<text x="20.75" y="31" font-size="12.6" fill="#111" text-anchor="end" transform="scale(0.93 1)">2</text>
<text x="28.60" y="31" font-size="12.4" fill="#111" transform="scale(0.895 1)">GND</text>
<rect x="0" y="36" width="224" height="18" fill="#f6f6f6"/>
<text x="20.75" y="49" font-size="12.6" fill="#111" text-anchor="end" transform="scale(0.93 1)">3</text>
<text x="28.60" y="49" font-size="12.4" fill="#111" transform="scale(0.895 1)">EDP_INT_AUX_P</text>
<rect x="0" y="54" width="224" height="18" fill="#e8e8e8"/>
<text x="20.75" y="67" font-size="12.6" fill="#111" text-anchor="end" transform="scale(0.93 1)">4</text>
<text x="28.60" y="67" font-size="12.4" fill="#111" transform="scale(0.895 1)">BUF_EDP_PANEL_PWR_EN</text>
<rect x="0" y="72" width="224" height="18" fill="#f6f6f6"/>
<text x="20.75" y="85" font-size="12.6" fill="#111" text-anchor="end" transform="scale(0.93 1)">5</text>
<text x="28.60" y="85" font-size="12.4" fill="#111" transform="scale(0.895 1)">GND</text>
<rect x="0" y="90" width="224" height="18" fill="#e8e8e8"/>
<text x="20.75" y="103" font-size="12.6" fill="#111" text-anchor="end" transform="scale(0.93 1)">6</text>
<text x="28.60" y="103" font-size="12.4" fill="#111" transform="scale(0.895 1)">DP_INT_HPD</text>
<rect x="0" y="108" width="224" height="18" fill="#f6f6f6"/>
<text x="20.75" y="121" font-size="12.6" fill="#111" text-anchor="end" transform="scale(0.93 1)">7</text>
<text x="28.60" y="121" font-size="12.4" fill="#111" transform="scale(0.895 1)">EDP_INT_ML_N&lt;0&gt;</text>
<rect x="0" y="126" width="224" height="18" fill="#e8e8e8"/>
<text x="20.75" y="139" font-size="12.6" fill="#111" text-anchor="end" transform="scale(0.93 1)">8</text>
<text x="28.60" y="139" font-size="12.4" fill="#111" transform="scale(0.895 1)">GND</text>
<rect x="0" y="144" width="224" height="18" fill="#f6f6f6"/>
<text x="20.75" y="157" font-size="12.6" fill="#111" text-anchor="end" transform="scale(0.93 1)">9</text>
<text x="28.60" y="157" font-size="12.4" fill="#111" transform="scale(0.895 1)">EDP_INT_ML_P&lt;0&gt;</text>
<rect x="0" y="162" width="224" height="18" fill="#e8e8e8"/>
<text x="25.16" y="175" font-size="12.6" fill="#111" text-anchor="end" transform="scale(0.93 1)">10</text>
<text x="33.07" y="175" font-size="12.4" fill="#111" transform="scale(0.895 1)">LCD_IRQ_L</text>
<rect x="0" y="180" width="224" height="18" fill="#f6f6f6"/>
<text x="25.16" y="193" font-size="12.6" fill="#111" text-anchor="end" transform="scale(0.93 1)">11</text>
<text x="33.07" y="193" font-size="12.4" fill="#111" transform="scale(0.895 1)">GND</text>
<rect x="0" y="198" width="224" height="18" fill="#e8e8e8"/>
<text x="25.16" y="211" font-size="12.6" fill="#111" text-anchor="end" transform="scale(0.93 1)">12</text>
<text x="33.07" y="211" font-size="12.4" fill="#111" transform="scale(0.895 1)">GND</text>
<rect x="0" y="216" width="224" height="18" fill="#f6f6f6"/>
<text x="25.16" y="229" font-size="12.6" fill="#111" text-anchor="end" transform="scale(0.93 1)">13</text>
<text x="33.07" y="229" font-size="12.4" fill="#111" transform="scale(0.895 1)">EDP_INT_ML_N&lt;1&gt;</text>
<rect x="0" y="234" width="224" height="18" fill="#e8e8e8"/>
<text x="25.16" y="247" font-size="12.6" fill="#111" text-anchor="end" transform="scale(0.93 1)">14</text>
<text x="33.07" y="247" font-size="12.4" fill="#111" transform="scale(0.895 1)">BKLT_PWM_TCON2MLB</text>
<rect x="0" y="252" width="224" height="18" fill="#f6f6f6"/>
<text x="25.16" y="265" font-size="12.6" fill="#111" text-anchor="end" transform="scale(0.93 1)">15</text>
<text x="33.07" y="265" font-size="12.4" fill="#111" transform="scale(0.895 1)">EDP_INT_ML_P&lt;1&gt;</text>
<rect x="0" y="270" width="224" height="18" fill="#e8e8e8"/>
<text x="25.16" y="283" font-size="12.6" fill="#111" text-anchor="end" transform="scale(0.93 1)">16</text>
<text x="33.07" y="283" font-size="12.4" fill="#111" transform="scale(0.895 1)">BKLT_PWM_MLB2TCON</text>
<rect x="0" y="288" width="224" height="18" fill="#f6f6f6"/>
<text x="25.16" y="301" font-size="12.6" fill="#111" text-anchor="end" transform="scale(0.93 1)">17</text>
<text x="33.07" y="301" font-size="12.4" fill="#111" transform="scale(0.895 1)">GND</text>
<rect x="0" y="306" width="224" height="18" fill="#e8e8e8"/>
<text x="25.16" y="319" font-size="12.6" fill="#111" text-anchor="end" transform="scale(0.93 1)">18</text>
<text x="33.07" y="319" font-size="12.4" fill="#111" transform="scale(0.895 1)">GND</text>
<rect x="0" y="324" width="224" height="18" fill="#f6f6f6"/>
<text x="25.16" y="337" font-size="12.6" fill="#111" text-anchor="end" transform="scale(0.93 1)">19</text>
<text x="33.07" y="337" font-size="12.4" fill="#111" transform="scale(0.895 1)">EDP_INT_ML_N&lt;2&gt;</text>
<rect x="0" y="342" width="224" height="18" fill="#e8e8e8"/>
<text x="25.16" y="355" font-size="12.6" fill="#111" text-anchor="end" transform="scale(0.93 1)">20</text>
<text x="33.07" y="355" font-size="12.4" fill="#111" transform="scale(0.895 1)">GND</text>
<rect x="0" y="360" width="224" height="18" fill="#f6f6f6"/>
<text x="25.16" y="373" font-size="12.6" fill="#111" text-anchor="end" transform="scale(0.93 1)">21</text>
<text x="33.07" y="373" font-size="12.4" fill="#111" transform="scale(0.895 1)">EDP_INT_ML_P&lt;2&gt;</text>
<rect x="0" y="378" width="224" height="18" fill="#e8e8e8"/>
<text x="25.16" y="391" font-size="12.6" fill="#111" text-anchor="end" transform="scale(0.93 1)">22</text>
<text x="33.07" y="391" font-size="12.4" fill="#111" transform="scale(0.895 1)">GND</text>
<rect x="0" y="396" width="224" height="18" fill="#f6f6f6"/>
<text x="25.16" y="409" font-size="12.6" fill="#111" text-anchor="end" transform="scale(0.93 1)">23</text>
<text x="33.07" y="409" font-size="12.4" fill="#111" transform="scale(0.895 1)">EDP_INT_ML_N&lt;3&gt;</text>
<rect x="227" y="3" width="13" height="129" rx="6.5" fill="#b0b0b0"/>
</svg>
<rect x="1478.0" y="726.4" width="43.0" height="13.5" fill="#bebebe"/>
<text x="1499.5" y="737.7" font-size="12.2" fill="#141414" font-weight="400" text-anchor="middle">C4062</text>
<rect x="1528.0" y="726.4" width="16.5" height="13.5" fill="#bebebe"/>
<text x="1536.2" y="737.7" font-size="12.2" fill="#141414" font-weight="400" text-anchor="middle">Z</text>
<rect x="1552.0" y="726.4" width="70.0" height="13.5" fill="#bebebe"/>
<text x="1587.0" y="737.7" font-size="12.2" fill="#141414" font-weight="400" text-anchor="middle" textLength="60.5" lengthAdjust="spacingAndGlyphs">PDF Search</text>
<text x="1631.0" y="737.7" font-size="12.2" fill="#111" font-weight="400" text-anchor="start">2 Pins</text>
<rect x="1478.0" y="744.4" width="252.0" height="40.0" fill="#f9f9f9"/>
<rect x="1482.5" y="747.4" width="243.3" height="33.5" fill="#f6f6f6" stroke="#3c3c3c" stroke-width="1"/>
<svg x="1483" y="747.9" width="242" height="32.5" overflow="hidden">
<rect x="0" y="0" width="224" height="18" fill="#f6f6f6"/>
<text x="20.75" y="13" font-size="12.6" fill="#111" text-anchor="end" transform="scale(0.93 1)">1</text>
<text x="28.60" y="13" font-size="12.4" fill="#111" transform="scale(0.895 1)">PP5V_S0_ALSCAM_F</text>
<rect x="0" y="18" width="224" height="18" fill="#e8e8e8"/>
<text x="20.75" y="31" font-size="12.6" fill="#111" text-anchor="end" transform="scale(0.93 1)">2</text>
<text x="28.60" y="31" font-size="12.4" fill="#111" transform="scale(0.895 1)">GND</text>
<rect x="227" y="2.5" width="13" height="27" rx="6.5" fill="#b0b0b0"/>
</svg>
<rect x="1478.0" y="801.2" width="44.0" height="13.5" fill="#bebebe"/>
<text x="1500.0" y="812.5" font-size="12.2" fill="#141414" font-weight="400" text-anchor="middle">CC727</text>
<rect x="1528.0" y="801.2" width="16.5" height="13.5" fill="#bebebe"/>
<text x="1536.2" y="812.5" font-size="12.2" fill="#141414" font-weight="400" text-anchor="middle">Z</text>
<rect x="1552.0" y="801.2" width="70.0" height="13.5" fill="#bebebe"/>
<text x="1587.0" y="812.5" font-size="12.2" fill="#141414" font-weight="400" text-anchor="middle" textLength="60.5" lengthAdjust="spacingAndGlyphs">PDF Search</text>
<text x="1631.0" y="812.5" font-size="12.2" fill="#111" font-weight="400" text-anchor="start">2 Pins</text>
<rect x="1478.0" y="819.0" width="252.0" height="40.0" fill="#f9f9f9"/>
<rect x="1482.5" y="822.0" width="243.3" height="33.5" fill="#f6f6f6" stroke="#3c3c3c" stroke-width="1"/>
<svg x="1483" y="822.5" width="242" height="32.5" overflow="hidden">
<rect x="0" y="0" width="224" height="18" fill="#f6f6f6"/>
<text x="20.75" y="13" font-size="12.6" fill="#111" text-anchor="end" transform="scale(0.93 1)">1</text>
<text x="28.60" y="13" font-size="12.4" fill="#111" transform="scale(0.895 1)">PP5V_S0_ALSCAM_F</text>
<rect x="0" y="18" width="224" height="18" fill="#e8e8e8"/>
<text x="20.75" y="31" font-size="12.6" fill="#111" text-anchor="end" transform="scale(0.93 1)">2</text>
<text x="28.60" y="31" font-size="12.4" fill="#111" transform="scale(0.895 1)">GND</text>
<rect x="227" y="2.5" width="13" height="27" rx="6.5" fill="#b0b0b0"/>
</svg></svg>

<div id="status" class="a"></div>
<div id="stxt" class="a">Free Edition  V5.0436  L4004:2(PP5V_S0_ALSCAM_F)</div>
</div><div style="position:absolute;left:0;top:0;width:1714px;height:28px;border-radius:10px 10px 0 0;border:1px solid #5e5e5e;border-bottom:none"></div><div style="position:absolute;left:0;top:28px;width:1714px;height:872px;border-radius:0 0 8px 8px;border:1px solid rgba(219,219,219,0.6);border-top:none;border-bottom-color:rgba(110,110,110,0.8)"></div></div>
</body></html>
